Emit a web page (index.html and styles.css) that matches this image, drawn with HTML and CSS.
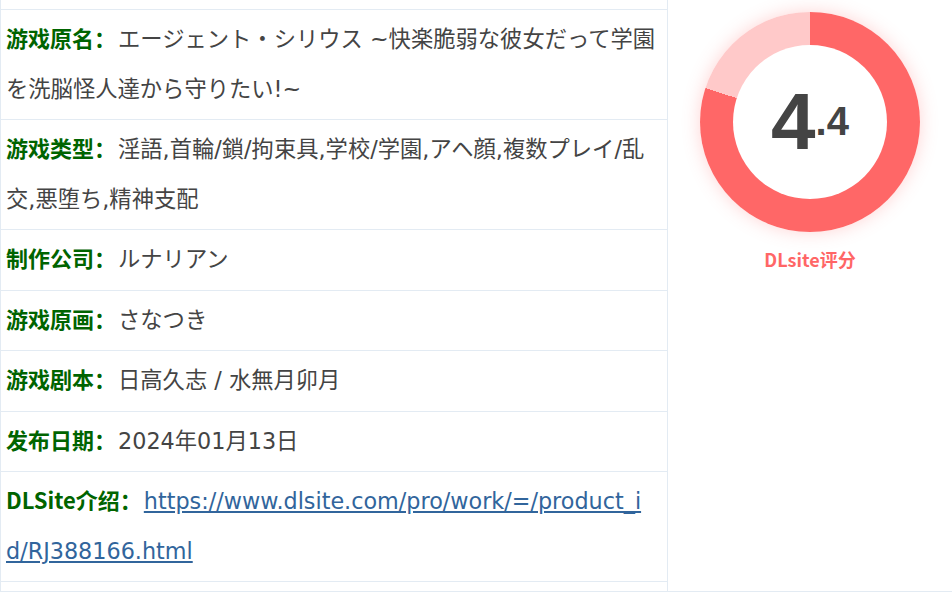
FILE: index.html
```html
<!DOCTYPE html>
<html lang="zh">
<head>
<meta charset="utf-8">
<title>DLsite</title>
<link rel="stylesheet" href="styles.css">
</head>
<body>
<div class="page">
  <div class="info">
    <div class="row row-stub"></div>
    <div class="row"><span class="label">游戏原名：</span>エージェント・シリウス ~快楽脆弱な彼女だって学園<br>を洗脳怪人達から守りたい!~</div>
    <div class="row"><span class="label">游戏类型：</span>淫語,首輪/鎖/拘束具,学校/学園,アヘ顔,複数プレイ/乱<br>交,悪堕ち,精神支配</div>
    <div class="row"><span class="label">制作公司：</span>ルナリアン</div>
    <div class="row"><span class="label">游戏原画：</span>さなつき</div>
    <div class="row"><span class="label">游戏剧本：</span>日高久志 / 水無月卯月</div>
    <div class="row"><span class="label">发布日期：</span>2024年01月13日</div>
    <div class="row"><span class="label">DLSite介绍：</span><a class="link" href="#">https://www.dlsite.com/pro/work/=/product_i<br>d/RJ388166.html</a></div>
    <div class="row row-stub row-last"></div>
  </div>
  <aside class="rating">
    <div class="donut">
      <div class="donut-hole">
        <div class="score"><span class="score-int">4</span><span class="score-dec">.4</span></div>
      </div>
    </div>
    <div class="rating-label">DLsite评分</div>
  </aside>
</div>
</body>
</html>
```
FILE: styles.css
```css
html, body {
  margin: 0;
  padding: 0;
  background: #ffffff;
}

.page {
  display: flex;
  height: 592px;
  box-sizing: border-box;
  border-left: 1px solid #e3ebf3;
  border-bottom: 1px solid #e3ebf3;
}

.info {
  width: 667px;
  flex: none;
  box-sizing: border-box;
  border-right: 1px solid #e3ebf3;
}

.row {
  padding: 5px 5px;
  font-family: "DejaVu Sans", "Noto Sans CJK SC", sans-serif;
  font-size: 22.3px;
  line-height: 49.5px;
  color: #444444;
  border-bottom: 1px solid #e3ebf3;
  white-space: nowrap;
}

.row-stub {
  height: 9px;
  padding: 0;
}

.row-last {
  border-bottom: none;
}

.label {
  font-family: "Noto Sans CJK SC", sans-serif;
  font-weight: 700;
  font-size: 22px;
  line-height: 1;
  color: #006400;
  margin-right: 2px;
}

.link {
  color: #31659c;
  text-decoration: underline;
}

.rating {
  flex: 1;
  display: flex;
  flex-direction: column;
  align-items: center;
  padding-top: 12px;
}

.donut {
  width: 220px;
  height: 220px;
  border-radius: 50%;
  background: conic-gradient(#ff6767 0 80%, #ffc9c9 80% 100%);
  box-shadow: 0 0 18px rgba(255, 102, 102, 0.28);
  display: flex;
  align-items: center;
  justify-content: center;
}

.donut-hole {
  width: 154px;
  height: 154px;
  border-radius: 50%;
  background: #ffffff;
  display: flex;
  align-items: center;
  justify-content: center;
  box-sizing: border-box;
  padding-top: 21px;
}

.score {
  font-family: "Liberation Sans", Arial, sans-serif;
  font-weight: 700;
  color: #444444;
  line-height: 80px;
  white-space: nowrap;
}

.score-int {
  font-size: 80px;
}

.score-dec {
  font-size: 40px;
  vertical-align: 14px;
}

.rating-label {
  margin-top: 15px;
  font-family: "Noto Sans CJK SC", sans-serif;
  font-weight: 700;
  font-size: 18px;
  line-height: 24px;
  color: #ff6666;
}
```
